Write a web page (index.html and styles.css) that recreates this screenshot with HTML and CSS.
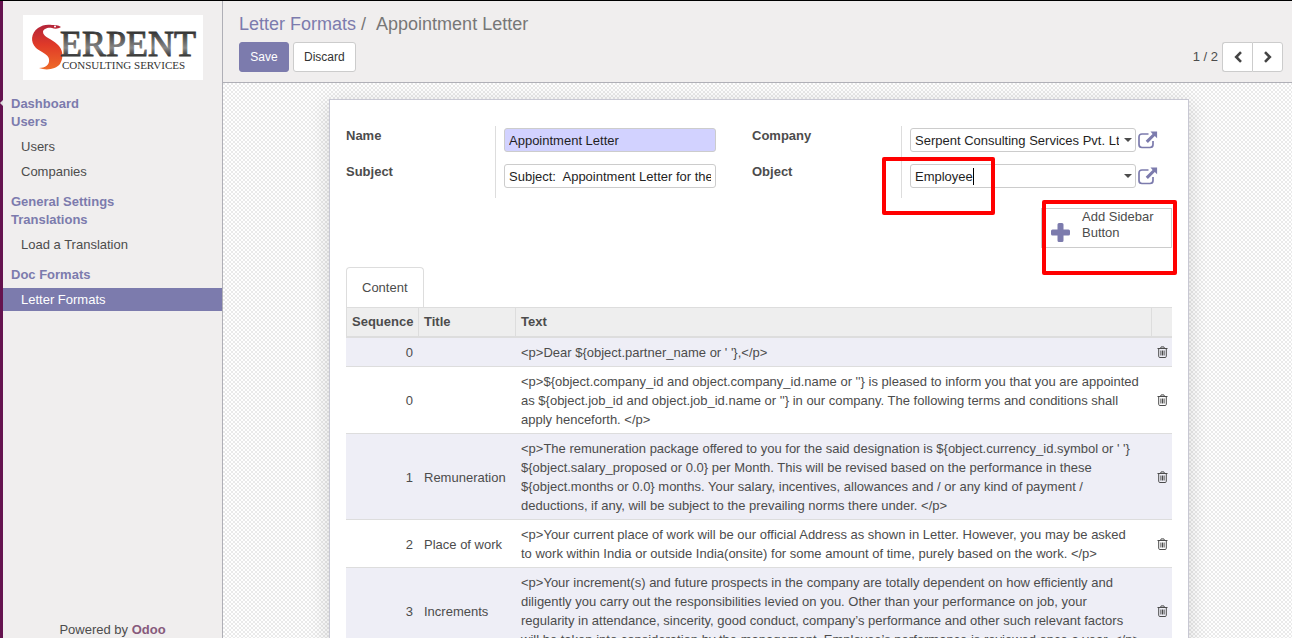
FILE: index.html
```
<!DOCTYPE html>
<html lang="en">
<head>
<meta charset="utf-8">
<title>Appointment Letter</title>
<link rel="stylesheet" href="styles.css">
</head>
<body>
<svg class="defs" aria-hidden="true">
  <symbol id="trash" viewBox="0 0 11 12"><path d="M.5 2.5h10M3.5 2.5l.6-1.6h2.8l.6 1.6M1.7 2.5v7.8q0 1.2 1.1 1.2h5.4q1.1 0 1.1-1.2V2.5M3.9 4.5v5M5.5 4.5v5M7.1 4.5v5" fill="none" stroke="currentColor"/></symbol>
  <symbol id="external" viewBox="0 0 20 18"><path d="M10.5 3H4Q1 3 1 6v7.5q0 3 3 3h8q3 0 3-3V10" fill="none" stroke="currentColor" stroke-width="1.7"/><path d="M12.5.5h6.6v6.8l-2.3-2.2-6.9 6.900-2.200-2.200 6.900-6.900z" fill="currentColor"/></symbol>
</svg>
<div class="app">
  <aside class="sidebar">
    <svg class="logo" viewBox="0 0 180 65" role="img" aria-label="Serpent Consulting Services">
      <defs>
        <linearGradient id="steel" x1="0" y1="0" x2="0" y2="1"><stop offset=".2" stop-color="#333"/><stop offset=".6" stop-color="#888"/><stop offset=".85" stop-color="#222"/></linearGradient>
        <linearGradient id="snake" x1="0" y1="0" x2="0" y2="1"><stop offset="0" stop-color="#b3243a"/><stop offset=".45" stop-color="#e03a28"/><stop offset="1" stop-color="#ee6a28"/></linearGradient>
      </defs>
      <path fill="url(#snake)" d="M38 12c-3-2-6-2-9-2-5-1-10 0-14 3-7 5-8 14-2 20 5 4 12 6 13 11 1 6-4 9-10 9 8 3 17 1 21-4 4-7 3-15-3-20-5-5-14-7-14-12 0-3 5-5 9-4 3 1 6 1 9-1z"/>
      <circle cx="32" cy="11.500" r="1" fill="#fff"/>
      <text class="logo-name" x="37" y="41">ERPENT</text>
      <text class="logo-sub" x="39" y="54">CONSULTING SERVICES</text>
    </svg>
    <nav class="menu">
      <a class="heading" href="#">Dashboard</a>
      <a class="heading" href="#">Users</a>
      <ul>
        <li><a href="#">Users</a></li>
        <li><a href="#">Companies</a></li>
      </ul>
      <a class="heading" href="#">General Settings</a>
      <a class="heading" href="#">Translations</a>
      <ul><li><a href="#">Load a Translation</a></li></ul>
      <a class="heading" href="#">Doc Formats</a>
      <ul><li class="active"><a href="#">Letter Formats</a></li></ul>
    </nav>
    <footer class="powered">Powered by <a href="#">Odoo</a></footer>
    <span class="notch"></span>
  </aside>
  <main class="main">
    <header class="control">
      <div>
        <nav class="crumbs"><a href="#">Letter Formats</a><span>/</span><span class="current">Appointment Letter</span></nav>
        <div class="buttons">
          <button class="btn primary" type="button">Save</button>
          <button class="btn" type="button">Discard</button>
        </div>
      </div>
      <div class="pager">
        <span>1 / 2</span>
        <div class="pager-buttons">
          <button type="button" aria-label="Previous"><svg viewBox="0 0 10 12"><path d="M8 1.2 3.2 6 8 10.8" /></svg></button>
          <button type="button" aria-label="Next"><svg viewBox="0 0 10 12"><path d="M2 1.2 6.8 6 2 10.8" /></svg></button>
        </div>
      </div>
    </header>
    <div class="canvas">
      <section class="sheet">
        <div class="groups">
          <div class="group">
            <label for="name">Name</label>
            <div class="cell"><input class="required" id="name" type="text" value="Appointment Letter"></div>
            <label for="subject">Subject</label>
            <div class="cell"><input id="subject" type="text" value="Subject:&nbsp; Appointment Letter for the post"></div>
          </div>
          <div class="group relations">
            <label for="company">Company</label>
            <div class="cell">
              <div class="combo"><input id="company" type="text" value="Serpent Consulting Services Pvt. Ltd."><span class="arrow"></span></div>
              <button class="open" type="button" aria-label="Open company"><svg><use href="#external"/></svg></button>
            </div>
            <label for="object">Object</label>
            <div class="cell">
              <div class="combo"><input id="object" type="text" value="Employee"><span class="arrow"></span><span class="caret"></span></div>
              <button class="open" type="button" aria-label="Open object"><svg><use href="#external"/></svg></button>
            </div>
            <span class="mark mark-object"></span>
          </div>
        </div>
        <div class="actions">
          <button class="add" type="button">
            <svg viewBox="0 0 19 19"><path d="M8 0h3q1.500 0 1.500 1.500v5h5Q19 6.500 19 8v3q0 1.500-1.500 1.500h-5v5q0 1.500-1.500 1.500H8q-1.500 0-1.500-1.500v-5h-5Q0 12.500 0 11V8q0-1.500 1.500-1.500h5v-5Q6.500 0 8 0z" fill="currentColor"/></svg>
            <span>Add Sidebar Button</span>
          </button>
          <span class="mark mark-add"></span>
        </div>
        <div class="tabs"><button class="tab" type="button">Content</button></div>
        <table>
          <thead><tr><th class="seq">Sequence</th><th class="title">Title</th><th>Text</th><th class="del"></th></tr></thead>
          <tbody>
            <tr><td class="seq">0</td><td></td><td>&lt;p&gt;Dear ${object.partner_name or ' '},&lt;/p&gt;</td><td class="del"><button type="button" aria-label="Delete"><svg><use href="#trash"/></svg></button></td></tr>
            <tr><td class="seq">0</td><td></td><td>&lt;p&gt;${object.company_id and object.company_id.name or ''} is pleased to inform you that you are appointed as ${object.job_id and object.job_id.name or ''} in our company. The following terms and conditions shall apply henceforth. &lt;/p&gt;</td><td class="del"><button type="button" aria-label="Delete"><svg><use href="#trash"/></svg></button></td></tr>
            <tr><td class="seq">1</td><td>Remuneration</td><td>&lt;p&gt;The remuneration package offered to you for the said designation is ${object.currency_id.symbol or ' '} ${object.salary_proposed or 0.0} per Month. This will be revised based on the performance in these ${object.months or 0.0} months. Your salary, incentives, allowances and / or any kind of payment / deductions, if any, will be subject to the prevailing norms there under. &lt;/p&gt;</td><td class="del"><button type="button" aria-label="Delete"><svg><use href="#trash"/></svg></button></td></tr>
            <tr><td class="seq">2</td><td>Place of work</td><td>&lt;p&gt;Your current place of work will be our official Address as shown in Letter. However, you may be asked<br>to work within India or outside India(onsite) for some amount of time, purely based on the work. &lt;/p&gt;</td><td class="del"><button type="button" aria-label="Delete"><svg><use href="#trash"/></svg></button></td></tr>
            <tr><td class="seq">3</td><td>Increments</td><td>&lt;p&gt;Your increment(s) and future prospects in the company are totally dependent on how efficiently and diligently you carry out the responsibilities levied on you. Other than your performance on job, your<br>regularity in attendance, sincerity, good conduct, company’s performance and other such relevant factors<br>will be taken into consideration by the management. Employee’s performance is reviewed once a year. &lt;/p&gt;</td><td class="del"><button type="button" aria-label="Delete"><svg><use href="#trash"/></svg></button></td></tr>
          </tbody>
        </table>
      </section>
    </div>
  </main>
</div>
</body>
</html>
```
FILE: styles.css
```
* { box-sizing: border-box; }
body { margin: 0; font: 13px/18px "Liberation Sans", Arial, sans-serif; color: #4c4c4c; }
a { color: #7c7bad; text-decoration: none; }
button, input { font: inherit; color: inherit; }
button { cursor: pointer; }
.defs { display: none; }

.app { display: flex; height: 100vh; overflow: hidden; border-top: 1px solid #000; }

.sidebar { position: relative; display: flex; flex-direction: column; flex: 0 0 222px; background: #f0eeee; border-left: 3px solid #65134f; }
.logo { width: 180px; height: 65px; margin: 14px 0 15px 20px; background: #fff; }
.logo-name { font: 36px "Liberation Serif", serif; fill: url(#steel); stroke: url(#steel); stroke-width: 1; }
.logo-sub { font: 11px "Liberation Serif", serif; fill: #333; }
.menu { flex: 1; }
.heading { display: block; padding-left: 8px; font-weight: bold; }
.menu ul { display: flex; flex-direction: column; gap: 2px; list-style: none; margin: 4px 0 10px; padding: 0; }
.menu li a { display: block; padding-left: 18px; line-height: 23px; color: #4c4c4c; }
.menu .active a { background: #7c7bad; color: #fff; }
.powered { text-align: center; line-height: 16px; }
.powered a { color: #875a7b; font-weight: bold; }
.notch { position: absolute; left: -3px; top: 99px; border: 3px solid transparent; border-right-color: #ddd; border-left: 0; }

.main { flex: 1; min-width: 0; display: flex; flex-direction: column; border-left: 1px solid #afafb6; }
.control { display: flex; justify-content: space-between; align-items: flex-end; padding: 11px 9px 10px 16px; background: #f0eeee; border-bottom: 1px solid #afafb6; }
.crumbs { display: flex; font-size: 18px; line-height: 24px; color: #777; }
.crumbs span { margin-left: 5px; }
.crumbs .current { margin-left: 10px; }
.buttons { display: flex; gap: 4px; margin-top: 6px; }
.btn { min-width: 50px; height: 30px; padding: 0 10px; font-size: 12px; color: #333; background: #fff; border: 1px solid #ccc; border-radius: 3px; }
.btn.primary { color: #fff; background: #7c7bad; border-color: #7c7bad; }
.pager { display: flex; gap: 4px; align-items: center; }
.pager-buttons { display: flex; }
.pager-buttons button { display: grid; place-items: center; width: 31px; height: 30px; padding: 0; background: #fff; border: 1px solid #ccc; border-radius: 0 3px 3px 0; }
.pager-buttons button:first-child { width: 30px; border-right: 0; border-radius: 3px 0 0 3px; }
.pager-buttons svg { width: 10px; height: 12px; fill: none; stroke: #444; stroke-width: 2.6; }

.canvas { flex: 1; min-height: 0; overflow: hidden; padding: 16px 0 0 3px; background: repeating-conic-gradient(#fff 0 25%, #eaeaea 0 50%) 0 0 / 4px 4px; }
.sheet { max-width: 860px; margin: 0 auto; padding: 26px 16px 16px; background: #fff; border: 1px solid #c8c8d3; box-shadow: 0 4px 20px rgba(0, 0, 0, .15); }

.groups { display: grid; grid-template-columns: 406fr 420fr; }
.group { position: relative; display: grid; grid-template-columns: 149px 1fr; grid-auto-rows: 36px; padding-right: 36px; }
.group.relations { padding-right: 14px; }
.group label { padding-top: 1px; font-weight: bold; }
.cell { display: flex; align-items: flex-start; gap: 2px; padding: 2px 0 0 8px; border-left: 1px solid #ddd; min-width: 0; }
.cell input { width: 100%; min-width: 0; height: 24px; padding: 0 4px; color: #1f1f1f; background: #fff; border: 1px solid #ccc; border-radius: 3px; outline: 0; }
.cell input.required { background: #d2d2ff; }
.combo { position: relative; flex: 1; min-width: 0; }
.combo input { display: block; padding-right: 16px; }
.arrow { position: absolute; right: 4px; top: 10px; border: 4px solid transparent; border-top-color: #4c4c4c; border-bottom: 0; pointer-events: none; }
.caret { position: absolute; left: 63px; top: 4px; width: 1px; height: 17px; background: #000; }
.open { flex: none; padding: 0; border: 0; background: none; color: #7c7bad; }
.open svg { display: block; width: 20px; height: 18px; margin-top: 3px; }
.mark { position: absolute; border: 4px solid #f00; border-radius: 2px; pointer-events: none; }
.mark-object { left: 130px; top: 31px; width: 113px; height: 58px; }

.actions { position: relative; display: flex; justify-content: flex-end; margin-top: 10px; }
.add { display: flex; gap: 12px; width: 131px; height: 40px; padding: 0 9px; line-height: 16px; text-align: left; background: #fff; border: 1px solid #ccc; }
.add svg { flex: none; width: 19px; height: 19px; margin-top: 14px; color: #7c7bad; }
.mark-add { right: -5px; top: -8px; width: 135px; height: 75px; }

.tabs { display: flex; margin-top: 19px; }
.tab { height: 40px; padding: 0 15px; background: #fff; border: 1px solid #ddd; border-bottom: 0; border-radius: 4px 4px 0 0; }
table { width: 100%; border-collapse: separate; border-spacing: 0; table-layout: fixed; line-height: 19px; }
th { height: 31px; padding: 0 5px 2px; text-align: left; background: #eee; border-top: 1px solid #ddd; border-bottom: 2px solid #ddd; border-left: 1px solid #ddd; }
td { padding: 5px 5px 4px 6px; border-bottom: 1px solid #ddd; vertical-align: middle; }
th.seq { width: 72px; }
th.title { width: 97px; }
th.del { width: 21px; }
td.seq { text-align: right; }
tbody tr:nth-child(odd) { background: #eeeef6; }
td.del { padding: 0 4px 0 6px; }
td.del button { display: block; padding: 0; border: 0; background: none; color: #4c4c4c; }
td.del svg { display: block; width: 11px; height: 12px; }
```
